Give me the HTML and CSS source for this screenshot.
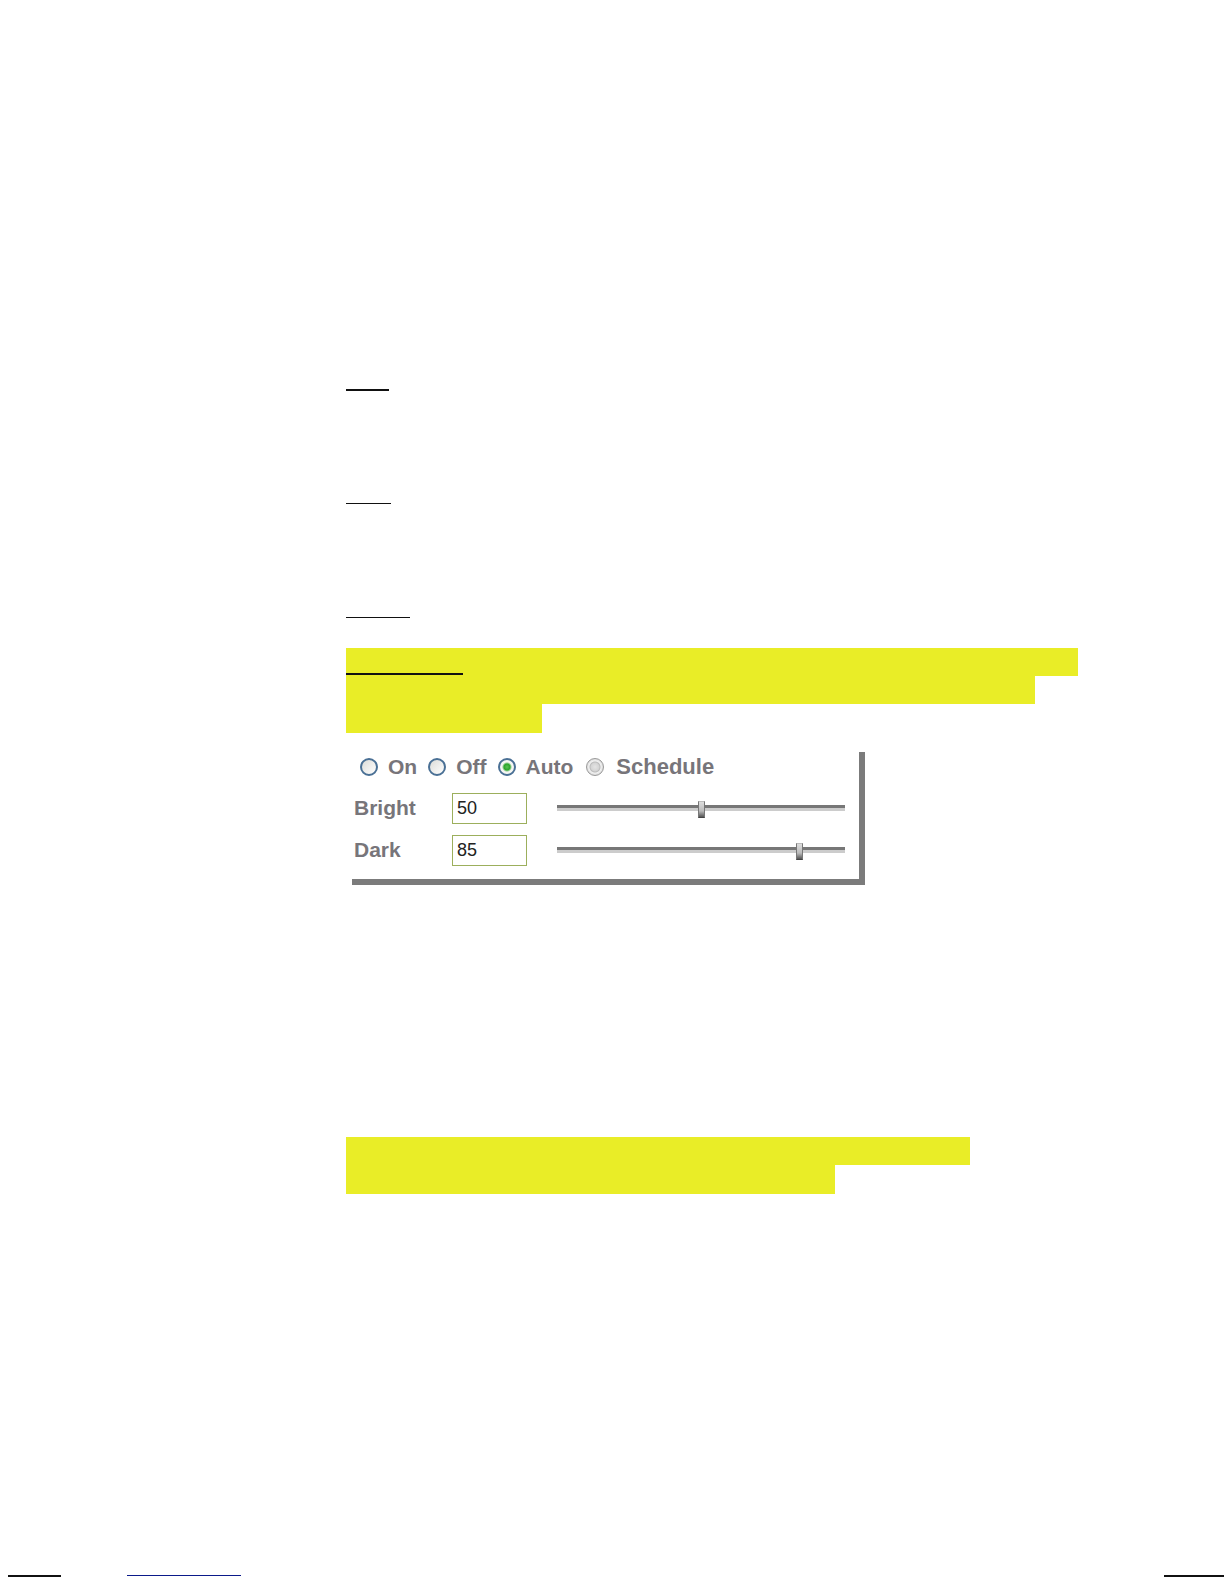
FILE: index.html
```
<!DOCTYPE html>
<html lang="en">
<head>
  <meta charset="UTF-8" />
  <meta name="viewport" content="width=device-width, initial-scale=1" />
  <title>Light Settings</title>
  <link rel="stylesheet" href="styles.css">
</head>
<body>

<main class="content">
  <div class="section"><div class="rule rule-on"></div></div>
  <div class="section"><div class="rule rule-off"></div></div>
  <div class="section section-short"><div class="rule rule-auto"></div></div>

  <div class="highlight">
    <div class="mark mark-full"><div class="rule rule-schedule"></div></div>
    <div class="mark mark-long"></div>
    <div class="mark mark-last mark-short"></div>
  </div>

  <form class="panel">
    <div class="modes">
      <label class="mode"><input type="radio" name="mode" value="on"> On</label>
      <label class="mode"><input type="radio" name="mode" value="off"> Off</label>
      <label class="mode"><input type="radio" name="mode" value="auto" checked> Auto</label>
      <label class="mode mode-schedule"><input type="radio" name="mode" value="schedule"> Schedule</label>
    </div>
    <div class="field">
      <label for="bright">Bright</label>
      <input type="text" class="value" id="bright" value="50">
      <input type="range" class="slider" id="brightRange" aria-label="Bright level" min="0" max="100" value="50">
    </div>
    <div class="field">
      <label for="dark">Dark</label>
      <input type="text" class="value" id="dark" value="85">
      <input type="range" class="slider" id="darkRange" aria-label="Dark level" min="0" max="100" value="85">
    </div>
  </form>

  <div class="highlight">
    <div class="mark mark-note"></div>
    <div class="mark mark-last mark-note-end"></div>
  </div>
</main>

<footer class="footer">
  <div class="rule rule-left"></div>
  <div class="rule rule-link"></div>
  <div class="rule rule-right"></div>
</footer>

<script>
  // keep each text box and its slider on the same value
  function link(boxId, rangeId) {
    const box = document.getElementById(boxId);
    const range = document.getElementById(rangeId);
    range.addEventListener('input', () => { box.value = range.value; });
    box.addEventListener('input', () => { range.value = box.value; });
  }

  link('bright', 'brightRange');
  link('dark', 'darkRange');
</script>

</body>
</html>
```
FILE: styles.css
```
* {
  box-sizing: border-box;
}

body {
  margin: 0;
  min-height: 100vh;
  display: flex;
  flex-direction: column;
  background: #fff;
  font-family: "Liberation Sans", Arial, sans-serif;
}

.content {
  padding: 389px 0 0 346px;
}

.section {
  height: 114px;
}

.section-short {
  height: 31px;
}

.rule {
  height: 2px;
  background: #111;
}

.rule-on {
  width: 43px;
}

.rule-off {
  width: 45px;
  height: 1px;
}

.rule-auto {
  width: 64px;
  height: 1px;
}

.rule-schedule {
  width: 117px;
}

.mark {
  height: 28px;
  max-width: 100%;
  background: #e9ed27;
}

.mark-full {
  width: 732px;
  padding-top: 25px;
}

.mark-long {
  width: 689px;
}

.mark-last {
  height: 29px;
}

.mark-short {
  width: 196px;
}

.mark-note {
  width: 624px;
}

.mark-note-end {
  width: 489px;
}

.panel {
  max-width: 513px;
  margin: 19px 0 252px 6px;
  padding: 0 14px 13px 2px;
  border-right: 6px solid #7b7b7b;
  border-bottom: 6px solid #7b7b7b;
  color: #77757a;
  font-size: 21px;
  font-weight: bold;
}

.modes {
  display: flex;
  align-items: center;
  gap: 11px;
  height: 30px;
  margin-bottom: 10px;
  padding-left: 6px;
}

.mode {
  display: flex;
  align-items: center;
  gap: 10px;
}

.mode-schedule {
  gap: 12px;
  margin-left: 2px;
  font-size: 22px;
}

.mode input {
  appearance: none;
  width: 18px;
  height: 18px;
  margin: 0;
  border: 2px solid #4a7095;
  border-radius: 50%;
  background: linear-gradient(135deg, #dcdcd8, #fff);
}

.mode input:checked {
  background: radial-gradient(circle, #5cc253 0, #2ba52b 3px, #f6f6f3 5px);
}

.mode-schedule input {
  border: 1px solid #999;
  background: radial-gradient(circle, #e4e4e4 0, #d4d4d4 4px, #bbb 5px, #f2f2f2 6px, #ddd 8px);
}

.mode-schedule input:checked {
  border: 2px solid #4a7095;
}

.field {
  display: flex;
  align-items: center;
  height: 32px;
}

.field + .field {
  margin-top: 10px;
}

.field label {
  width: 98px;
}

.value {
  width: 75px;
  height: 31px;
  margin-right: 30px;
  padding: 1px 4px 0;
  border: 1px solid #9caf5c;
  background: #fff;
  color: #222;
  font-family: inherit;
  font-size: 18px;
}

.slider {
  appearance: none;
  flex: 1;
  min-width: 0;
  height: 17px;
  margin: 3px 0 0;
  background: linear-gradient(#777 3px, #ccc 3px) center 4px / 100% 6px no-repeat;
}

.slider::-webkit-slider-thumb {
  appearance: none;
  width: 7px;
  height: 17px;
  border: 1px solid #777;
  border-top-color: #bbb;
  border-bottom-color: #444;
  background: linear-gradient(#ddd, #bbb 60%, #555);
}

.slider::-moz-range-thumb {
  width: 7px;
  height: 17px;
  border: 1px solid #777;
  border-radius: 0;
  background: linear-gradient(#ddd, #bbb 60%, #555);
}

.footer {
  display: flex;
  margin-top: auto;
  padding: 0 0 7px 8px;
}

.rule-left {
  width: 53px;
}

.rule-link {
  width: 114px;
  height: 1px;
  margin-left: 66px;
  background: #0b1a8a;
}

.rule-right {
  width: 60px;
  margin-left: auto;
}
```
